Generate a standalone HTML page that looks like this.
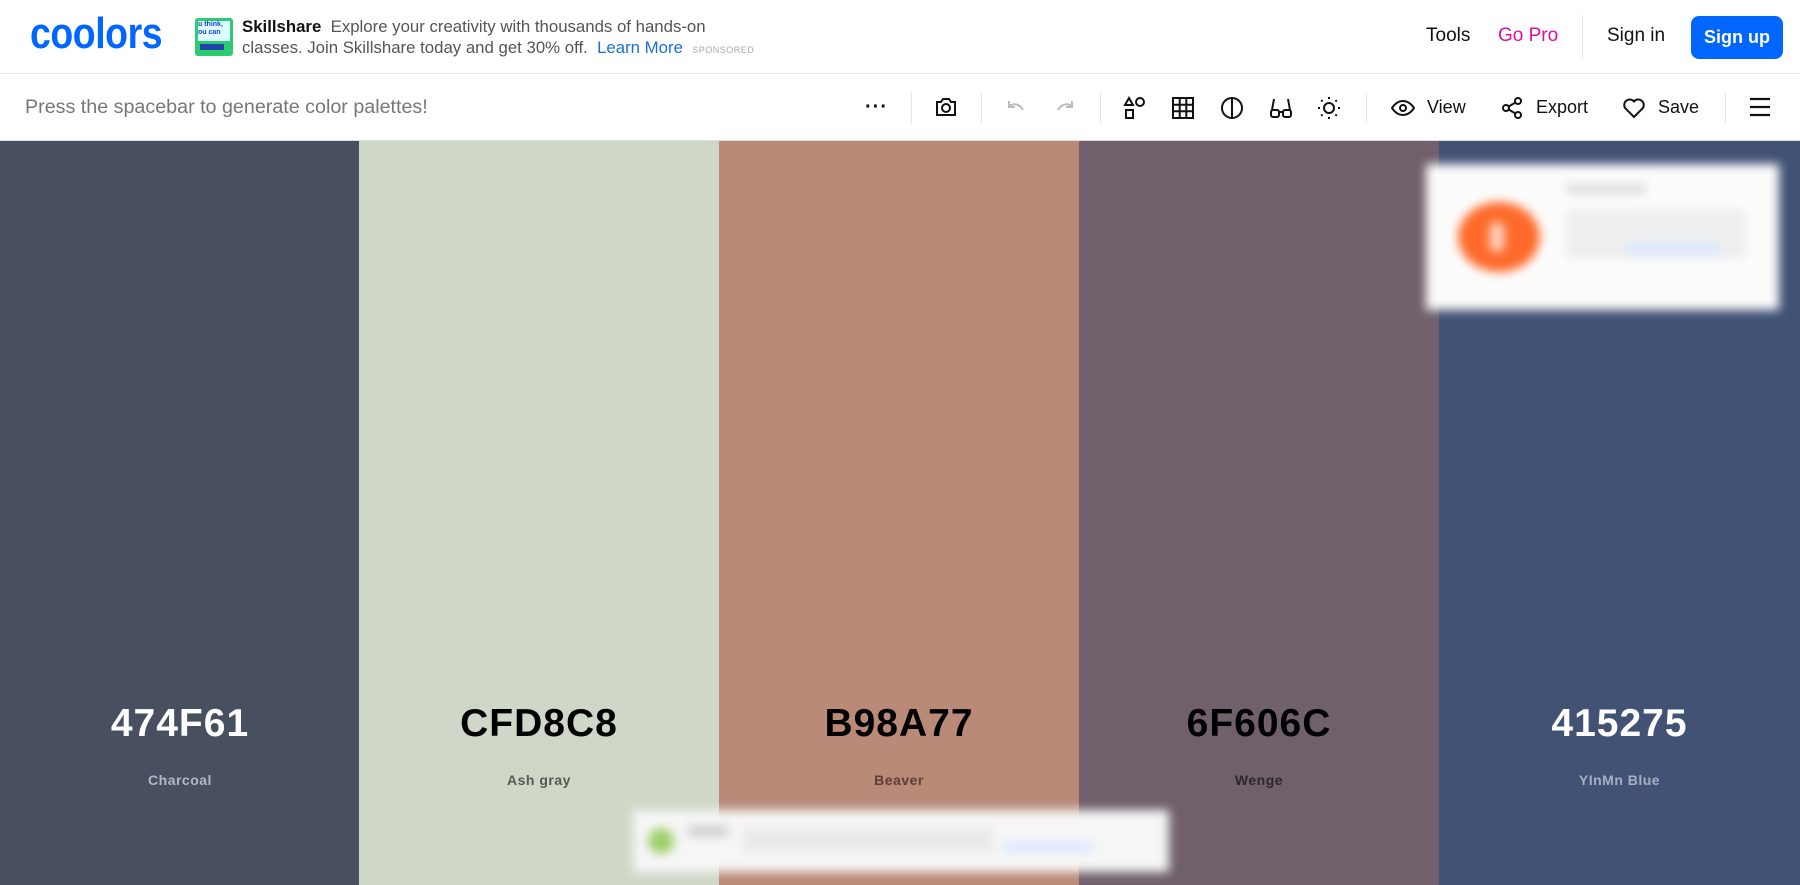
<!DOCTYPE html>
<html><head><meta charset="utf-8"><style>
*{margin:0;padding:0;box-sizing:border-box}
html,body{width:1800px;height:885px;overflow:hidden}
body{font-family:"Liberation Sans",sans-serif;background:#fff;position:relative}
.a{position:absolute}
.hdr{top:0;left:0;width:1800px;height:74px;border-bottom:1px solid #e8e8e8}
.tb{top:74px;left:0;width:1800px;height:67px;border-bottom:1px solid #ddd}
.logo{left:30px;top:12px;font-size:44px;font-weight:bold;color:#0066ff;letter-spacing:-0.5px;transform:scaleX(0.85);transform-origin:left top;line-height:44px}
.ad{left:242px;top:16px;font-size:16.8px;color:#555;line-height:21px;width:560px;white-space:nowrap}
.col{top:141px;height:744px;width:360px;text-align:center;overflow:hidden}
.hex{position:absolute;top:560px;left:0;width:100%;font-size:39px;font-weight:bold;letter-spacing:1px;line-height:45px}
.nm{position:absolute;top:630px;left:0;width:100%;font-size:14px;font-weight:bold;letter-spacing:.5px;line-height:18px}
.div{width:1px;height:32px;background:#e5e5e5;top:92px}
.ic{top:96px}
.lbl{top:97px;font-size:18px;color:#111}
</style></head><body>
<div class="a hdr"></div>
<div class="a logo">coolors</div>
<div class="a" style="left:195px;top:18px;width:38px;height:38px;background:#2ecc71;border-radius:3px;overflow:hidden"><div style="margin:3px;height:20px;background:#dff;font-size:7px;color:#14c;font-weight:bold;line-height:8px">u think,<br>ou can</div><div style="margin:2px 5px;height:6px;background:#24a;width:24px"></div></div>
<div class="a ad"><b style="color:#111">Skillshare</b>&nbsp; Explore your creativity with thousands of hands-on<br>classes. Join Skillshare today and get 30% off. &nbsp;<span style="color:#1a6fd8">Learn More</span> &nbsp;<span style="font-size:9px;color:#aaa;letter-spacing:.5px">SPONSORED</span></div>
<div class="a" style="left:1426px;top:25px;font-size:19px;color:#111">Tools</div>
<div class="a" style="left:1498px;top:25px;font-size:19px;color:#e0109e">Go Pro</div>
<div class="a" style="left:1582px;top:15px;width:1px;height:44px;background:#e8e8e8"></div>
<div class="a" style="left:1607px;top:25px;font-size:19px;color:#111">Sign in</div>
<div class="a" style="left:1691px;top:16px;width:92px;height:43px;background:#0066ff;border-radius:8px;color:#fff;font-size:18px;font-weight:bold;text-align:center;line-height:43px">Sign up</div>

<div class="a tb"></div>
<div class="a" style="left:25px;top:96px;font-size:19.7px;color:#777">Press the spacebar to generate color palettes!</div>
<div class="a" style="left:865px;top:96px;font-size:20px;font-weight:bold;letter-spacing:1px;color:#111">···</div>
<div class="a div" style="left:911px"></div>
<svg class="a ic" style="left:934px;top:95px" width="24" height="24" viewBox="0 0 24 24" fill="none" stroke="#111" stroke-width="2"><path d="M3 7h4l2-3h6l2 3h4v13H3z"/><circle cx="12" cy="13" r="4"/></svg>
<div class="a div" style="left:981px"></div>
<svg class="a" style="left:1005px;top:98px" width="22" height="18" viewBox="0 0 22 18" fill="none" stroke="#bbb" stroke-width="2"><path d="M4 3v6h6M4 9c3-4 10-4 14 3"/></svg>
<svg class="a" style="left:1054px;top:98px" width="22" height="18" viewBox="0 0 22 18" fill="none" stroke="#bbb" stroke-width="2"><path d="M18 3v6h-6M18 9c-3-4-10-4-14 3"/></svg>
<div class="a div" style="left:1100px"></div>
<svg class="a ic" style="left:1123px" width="24" height="24" viewBox="0 0 24 24" fill="none" stroke="#111" stroke-width="2"><path d="M6 2l4 7H2z"/><circle cx="17" cy="6" r="4"/><rect x="3" y="14" width="7" height="8"/></svg>
<svg class="a ic" style="left:1171px" width="24" height="24" viewBox="0 0 24 24" fill="none" stroke="#111" stroke-width="2"><rect x="2" y="2" width="20" height="20"/><path d="M8.7 2v20M15.3 2v20M2 8.7h20M2 15.3h20"/></svg>
<svg class="a ic" style="left:1220px" width="24" height="24" viewBox="0 0 24 24" fill="none" stroke="#111" stroke-width="2"><circle cx="12" cy="12" r="10"/><path d="M12 2v20"/></svg>
<svg class="a ic" style="left:1269px" width="24" height="24" viewBox="0 0 24 24" fill="none" stroke="#111" stroke-width="2"><path d="M5 3L3 14M19 3l2 11"/><rect x="2" y="14" width="8" height="7" rx="2"/><rect x="14" y="14" width="8" height="7" rx="2"/><path d="M10 16h4"/></svg>
<svg class="a ic" style="left:1317px" width="24" height="24" viewBox="0 0 24 24" fill="none" stroke="#111" stroke-width="2"><circle cx="12" cy="12" r="5"/><path d="M12 1v2M12 21v2M1 12h2M21 12h2M4.2 4.2l1.4 1.4M18.4 18.4l1.4 1.4M4.2 19.8l1.4-1.4M18.4 5.6l1.4-1.4"/></svg>
<div class="a div" style="left:1366px"></div>
<svg class="a ic" style="left:1391px;top:97px" width="24" height="22" viewBox="0 0 24 22" fill="none" stroke="#111" stroke-width="2"><path d="M1 11s4-7 11-7 11 7 11 7-4 7-11 7S1 11 1 11z"/><circle cx="12" cy="11" r="3"/></svg>
<div class="a lbl" style="left:1427px">View</div>
<svg class="a ic" style="left:1500px" width="24" height="24" viewBox="0 0 24 24" fill="none" stroke="#111" stroke-width="2"><circle cx="18" cy="5" r="3"/><circle cx="6" cy="12" r="3"/><circle cx="18" cy="19" r="3"/><path d="M8.6 13.5l6.8 4M15.4 6.5l-6.8 4"/></svg>
<div class="a lbl" style="left:1536px">Export</div>
<svg class="a ic" style="left:1622px" width="24" height="24" viewBox="0 0 24 24" fill="none" stroke="#111" stroke-width="2"><path d="M12 21l-8.5-8.5A5 5 0 0 1 12 5.5a5 5 0 0 1 8.5 7z"/></svg>
<div class="a lbl" style="left:1658px">Save</div>
<div class="a div" style="left:1725px"></div>
<svg class="a ic" style="left:1749px" width="22" height="22" viewBox="0 0 22 22" fill="none" stroke="#111" stroke-width="2.2"><path d="M1 3h20M1 11h20M1 19h20"/></svg>

<div class="a col" style="left:0;background:#474f61"><div class="hex" style="color:#fff">474F61</div><div class="nm" style="color:#b4b8c2">Charcoal</div></div>
<div class="a col" style="left:359px;background:#cfd8c8"><div class="hex" style="color:#000">CFD8C8</div><div class="nm" style="color:#555a52">Ash gray</div></div>
<div class="a col" style="left:719px;background:#b98a77"><div class="hex" style="color:#000">B98A77</div><div class="nm" style="color:#5c3f34">Beaver</div></div>
<div class="a col" style="left:1079px;background:#6f606c"><div class="hex" style="color:#000">6F606C</div><div class="nm" style="color:#2e262c">Wenge</div></div>
<div class="a col" style="left:1439px;width:361px;background:#415275"><div class="hex" style="color:#fff">415275</div><div class="nm" style="color:#a7b0c3">YInMn Blue</div></div>

<div class="a" style="left:1426px;top:164px;width:353px;height:146px;background:#fcfcfc;filter:blur(5px)">
<div class="a" style="left:32px;top:38px;width:82px;height:70px;border-radius:50%;background:#ff6a2a"></div>
<div class="a" style="left:64px;top:58px;width:14px;height:30px;border-radius:7px;background:#ffd8c8"></div>
<div class="a" style="left:140px;top:20px;width:80px;height:10px;background:#ddd"></div>
<div class="a" style="left:140px;top:45px;width:180px;height:50px;background:#eee"></div>
<div class="a" style="left:200px;top:80px;width:95px;height:10px;background:#dbe8ff"></div>
</div>
<div class="a" style="left:633px;top:810px;width:536px;height:62px;background:#f6f6f6;filter:blur(5px)">
<div class="a" style="left:15px;top:18px;width:26px;height:26px;border-radius:50%;background:#9ecf6a"></div>
<div class="a" style="left:55px;top:16px;width:40px;height:10px;background:#ccc"></div>
<div class="a" style="left:110px;top:18px;width:250px;height:24px;background:#eaeaea"></div>
<div class="a" style="left:370px;top:32px;width:90px;height:10px;background:#dbe8ff"></div>
</div>
</body></html>
